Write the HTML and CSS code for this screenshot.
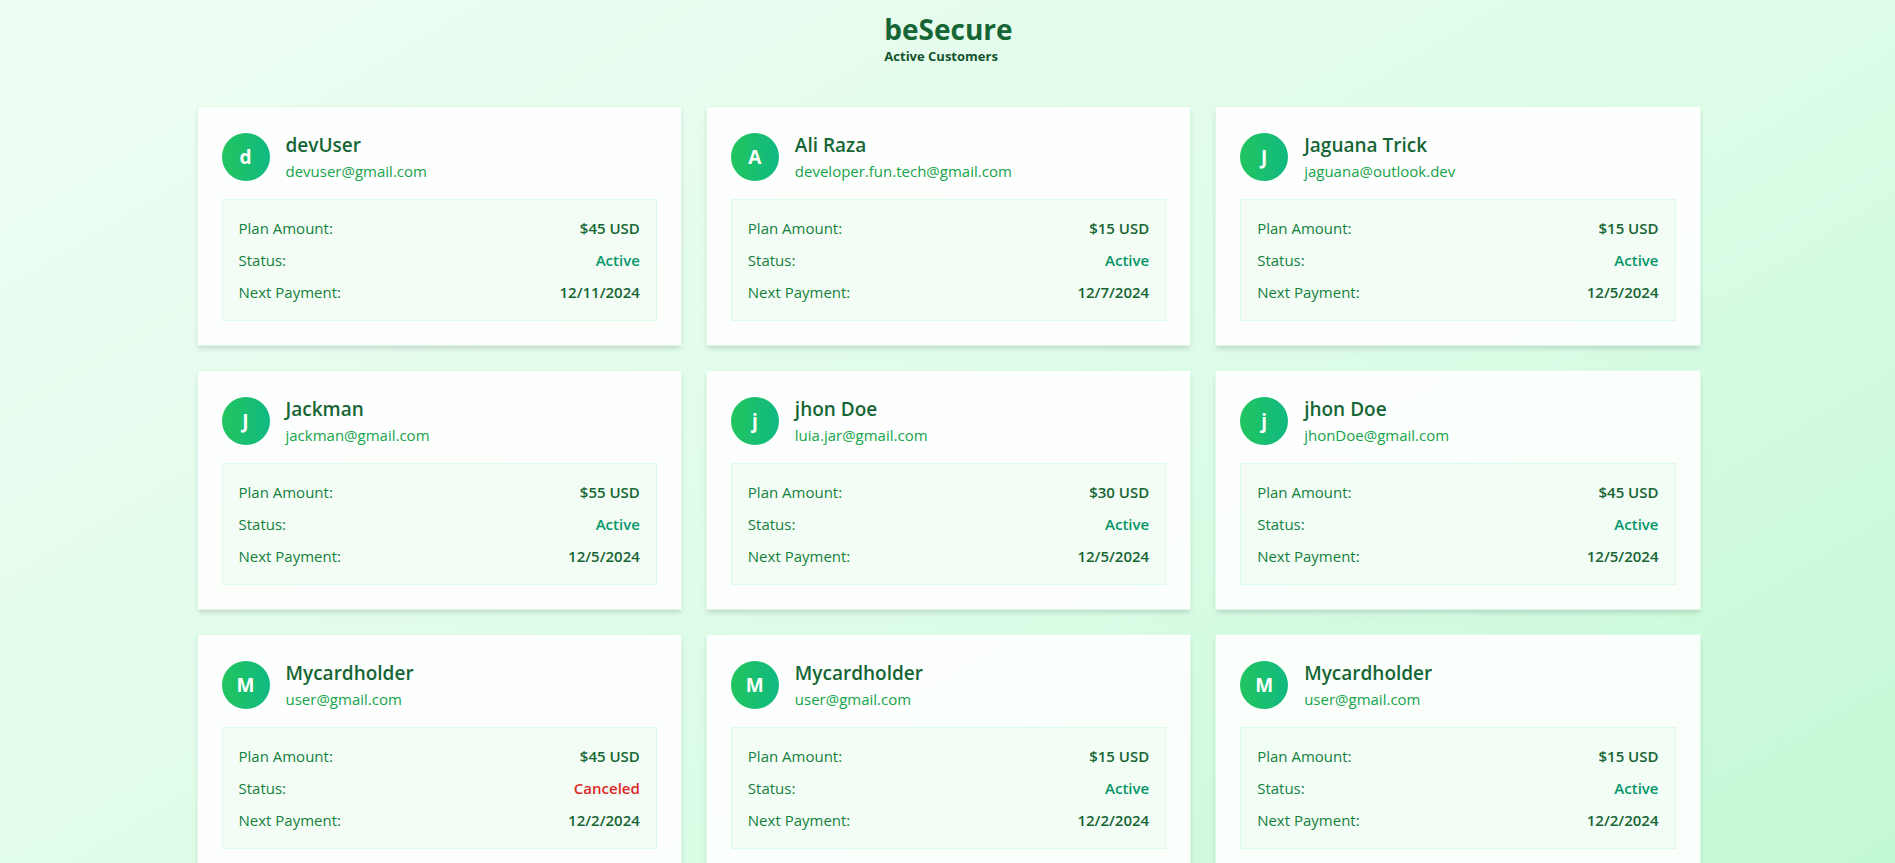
FILE: index.html
```html
<!DOCTYPE html>
<html lang="en">
<head>
<meta charset="utf-8">
<meta name="viewport" content="width=device-width, initial-scale=1">
<title>beSecure - Active Customers</title>
<link rel="stylesheet" href="styles.css">
</head>
<body>
<div class="page">
<header class="header">
  <div>
    <h1 class="brand">beSecure</h1>
    <p class="subtitle">Active Customers</p>
  </div>
</header>
<main class="grid">
  <article class="card">
    <div class="person"><div class="avatar">d</div><div><h2 class="name">devUser</h2><p class="email">devuser@gmail.com</p></div></div>
    <dl class="plan">
      <div class="row"><dt>Plan Amount:</dt><dd>$45 USD</dd></div>
      <div class="row"><dt>Status:</dt><dd class="active">Active</dd></div>
      <div class="row"><dt>Next Payment:</dt><dd>12/11/2024</dd></div>
    </dl>
  </article>
  <article class="card">
    <div class="person"><div class="avatar">A</div><div><h2 class="name">Ali Raza</h2><p class="email">developer.fun.tech@gmail.com</p></div></div>
    <dl class="plan">
      <div class="row"><dt>Plan Amount:</dt><dd>$15 USD</dd></div>
      <div class="row"><dt>Status:</dt><dd class="active">Active</dd></div>
      <div class="row"><dt>Next Payment:</dt><dd>12/7/2024</dd></div>
    </dl>
  </article>
  <article class="card">
    <div class="person"><div class="avatar">J</div><div><h2 class="name">Jaguana Trick</h2><p class="email">jaguana@outlook.dev</p></div></div>
    <dl class="plan">
      <div class="row"><dt>Plan Amount:</dt><dd>$15 USD</dd></div>
      <div class="row"><dt>Status:</dt><dd class="active">Active</dd></div>
      <div class="row"><dt>Next Payment:</dt><dd>12/5/2024</dd></div>
    </dl>
  </article>
  <article class="card">
    <div class="person"><div class="avatar">J</div><div><h2 class="name">Jackman</h2><p class="email">jackman@gmail.com</p></div></div>
    <dl class="plan">
      <div class="row"><dt>Plan Amount:</dt><dd>$55 USD</dd></div>
      <div class="row"><dt>Status:</dt><dd class="active">Active</dd></div>
      <div class="row"><dt>Next Payment:</dt><dd>12/5/2024</dd></div>
    </dl>
  </article>
  <article class="card">
    <div class="person"><div class="avatar">j</div><div><h2 class="name">jhon Doe</h2><p class="email">luia.jar@gmail.com</p></div></div>
    <dl class="plan">
      <div class="row"><dt>Plan Amount:</dt><dd>$30 USD</dd></div>
      <div class="row"><dt>Status:</dt><dd class="active">Active</dd></div>
      <div class="row"><dt>Next Payment:</dt><dd>12/5/2024</dd></div>
    </dl>
  </article>
  <article class="card">
    <div class="person"><div class="avatar">j</div><div><h2 class="name">jhon Doe</h2><p class="email">jhonDoe@gmail.com</p></div></div>
    <dl class="plan">
      <div class="row"><dt>Plan Amount:</dt><dd>$45 USD</dd></div>
      <div class="row"><dt>Status:</dt><dd class="active">Active</dd></div>
      <div class="row"><dt>Next Payment:</dt><dd>12/5/2024</dd></div>
    </dl>
  </article>
  <article class="card">
    <div class="person"><div class="avatar">M</div><div><h2 class="name">Mycardholder</h2><p class="email">user@gmail.com</p></div></div>
    <dl class="plan">
      <div class="row"><dt>Plan Amount:</dt><dd>$45 USD</dd></div>
      <div class="row"><dt>Status:</dt><dd class="canceled">Canceled</dd></div>
      <div class="row"><dt>Next Payment:</dt><dd>12/2/2024</dd></div>
    </dl>
  </article>
  <article class="card">
    <div class="person"><div class="avatar">M</div><div><h2 class="name">Mycardholder</h2><p class="email">user@gmail.com</p></div></div>
    <dl class="plan">
      <div class="row"><dt>Plan Amount:</dt><dd>$15 USD</dd></div>
      <div class="row"><dt>Status:</dt><dd class="active">Active</dd></div>
      <div class="row"><dt>Next Payment:</dt><dd>12/2/2024</dd></div>
    </dl>
  </article>
  <article class="card">
    <div class="person"><div class="avatar">M</div><div><h2 class="name">Mycardholder</h2><p class="email">user@gmail.com</p></div></div>
    <dl class="plan">
      <div class="row"><dt>Plan Amount:</dt><dd>$15 USD</dd></div>
      <div class="row"><dt>Status:</dt><dd class="active">Active</dd></div>
      <div class="row"><dt>Next Payment:</dt><dd>12/2/2024</dd></div>
    </dl>
  </article>
</main>
</div>
</body>
</html>
```
FILE: styles.css
```css
* {
  box-sizing: border-box;
  margin: 0;
  padding: 0;
}

body {
  font-family: "Open Sans", "Noto Sans", sans-serif;
  font-size: 15px;
  line-height: 24px;
  color: #166534;
}

.page {
  min-height: 100vh;
  padding: 12px 16px 264px 18px;
  background: linear-gradient(to bottom right, #f0fdf4, #dcfce7, #bbf7d0);
}

.header {
  display: flex;
  justify-content: center;
  margin-bottom: 40px;
}

.brand {
  font-size: 28px;
  line-height: 34px;
  font-weight: 700;
}

.subtitle {
  font-size: 13px;
  line-height: 20px;
  font-weight: 700;
  color: #14532d;
}

.grid {
  display: grid;
  grid-template-columns: repeat(3, 1fr);
  gap: 24px;
  max-width: 1504px;
  margin: 0 auto;
}

.card {
  padding: 24px;
  background: rgba(255, 255, 255, 0.9);
  border: 1px solid #dcfce7;
  box-shadow: 0 4px 6px -1px rgba(0, 0, 0, 0.1), 0 2px 4px -2px rgba(0, 0, 0, 0.1);
}

.person {
  display: flex;
  align-items: center;
  gap: 16px;
  margin-bottom: 16px;
}

.avatar {
  display: flex;
  align-items: center;
  justify-content: center;
  width: 48px;
  height: 48px;
  border-radius: 50%;
  background: linear-gradient(to right, #22c55e, #10b981);
  color: #fff;
  font-size: 19px;
  line-height: 28px;
  font-weight: 700;
}

.name {
  font-size: 19px;
  line-height: 28px;
  font-weight: 600;
}

.email {
  color: #16a34a;
}

.plan {
  display: grid;
  gap: 8px;
  padding: 16px;
  background: rgba(240, 253, 244, 0.8);
  border: 1px solid #dcfce7;
}

.row {
  display: flex;
  justify-content: space-between;
}

.row dt {
  color: #15803d;
}

.row dd {
  font-size: 15px;
  font-weight: 600;
}

.row .active {
  color: #059669;
}

.row .canceled {
  color: #dc2626;
}
```
